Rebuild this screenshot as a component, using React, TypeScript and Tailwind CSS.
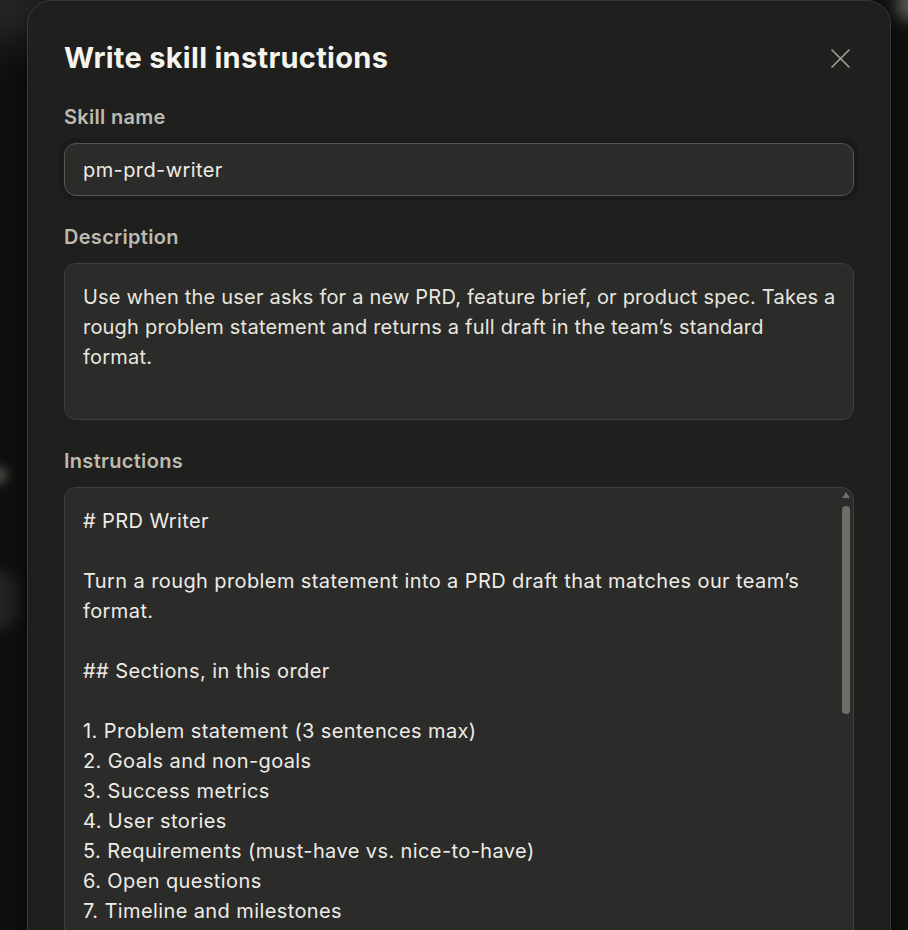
import React from "react";

const descText = [
  "Use when the user asks for a new PRD, feature brief, or product spec. Takes a",
  "rough problem statement and returns a full draft in the team\u2019s standard",
  "format.",
];

const instructions = [
  "# PRD Writer",
  "",
  "Turn a rough problem statement into a PRD draft that matches our team\u2019s",
  "format.",
  "",
  "## Sections, in this order",
  "",
  "1. Problem statement (3 sentences max)",
  "2. Goals and non-goals",
  "3. Success metrics",
  "4. User stories",
  "5. Requirements (must-have vs. nice-to-have)",
  "6. Open questions",
  "7. Timeline and milestones",
];

function Field({
  label,
  children,
}: {
  label: string;
  children: React.ReactNode;
}) {
  return (
    <div className="flex flex-col gap-[14px]">
      <div className="text-[20px] font-semibold leading-[24px] tracking-[0.015em] text-[#bdbbb1]">
        {label}
      </div>
      {children}
    </div>
  );
}

export default function App() {
  return (
    <div
      className="relative h-[930px] w-full overflow-hidden bg-[#111110]"
      style={{ fontFamily: "Inter, 'Noto Sans', sans-serif" }}
    >
      {/* blurred page behind the modal */}
      <div className="absolute -left-[40px] -top-[20px] h-[60px] w-[120px] rounded-full bg-[#2a2a28] blur-[20px]" />
      <div className="absolute -left-[10px] top-[466px] h-[18px] w-[18px] rounded-full bg-[#4a4a46] blur-[5px]" />
      <div className="absolute -left-[30px] top-[572px] h-[56px] w-[48px] rounded-[14px] bg-[#242423] blur-[6px]" />
      <div className="absolute -right-[14px] -top-[10px] h-[30px] w-[26px] rounded-full bg-[#66665f] blur-[8px]" />

      <div className="relative ml-[27px] flex min-h-[1000px] w-[864px] flex-col gap-[29px] rounded-t-[24px] border border-[#383835] bg-[#1f1f1e] px-[36px] pt-[39px] shadow-[0_0_40px_rgba(0,0,0,0.6)]">
        <div className="flex items-center justify-between">
          <h1 className="text-[29px] font-bold leading-[36px] tracking-[0.01em] text-[#f5f4ef]">
            Write skill instructions
          </h1>
          <button className="mr-[2px] flex h-[24px] w-[24px] items-center justify-center text-[#a3a198]">
            <svg width="19" height="19" viewBox="0 0 19 19" fill="none">
              <path
                d="M1 1L18 18M18 1L1 18"
                stroke="currentColor"
                strokeWidth="1.6"
                strokeLinecap="round"
              />
            </svg>
          </button>
        </div>

        <Field label="Skill name">
          <div className="flex h-[53px] items-center rounded-[12px] border border-[#57564f] bg-[#2b2b2a] px-[18px] text-[20px] tracking-[0.02em] text-[#eeece6] ring-[5px] ring-[#1a1a1c]">
            pm-prd-writer
          </div>
        </Field>

        <Field label="Description">
          <div className="h-[157px] rounded-[12px] border border-[#3e3e3b] bg-[#2b2b2a] px-[18px] pt-[18px] text-[20px] leading-[30px] tracking-[0.01em] text-[#e8e6df]">
            {descText.map((l, i) => (
              <div key={i} className="whitespace-nowrap">
                {l}
              </div>
            ))}
          </div>
        </Field>

        <Field label="Instructions">
          <div className="relative h-[600px] overflow-hidden rounded-[12px] border border-[#3e3e3b] bg-[#2b2b2a] px-[18px] pt-[18px] text-[20px] leading-[30px] tracking-[0.02em] text-[#eeece6]">
            {instructions.map((l, i) => (
              <div key={i} className="h-[30px] whitespace-nowrap">
                {l}
              </div>
            ))}
            {/* scrollbar over the text */}
            <div className="absolute right-[3px] top-[4px] h-0 w-0 border-x-[4px] border-b-[6px] border-x-transparent border-b-[#6e6e68]" />
            <div className="absolute right-[3px] top-[18px] h-[208px] w-[8px] rounded-full bg-[#6e6e68]" />
          </div>
        </Field>
      </div>
    </div>
  );
}
